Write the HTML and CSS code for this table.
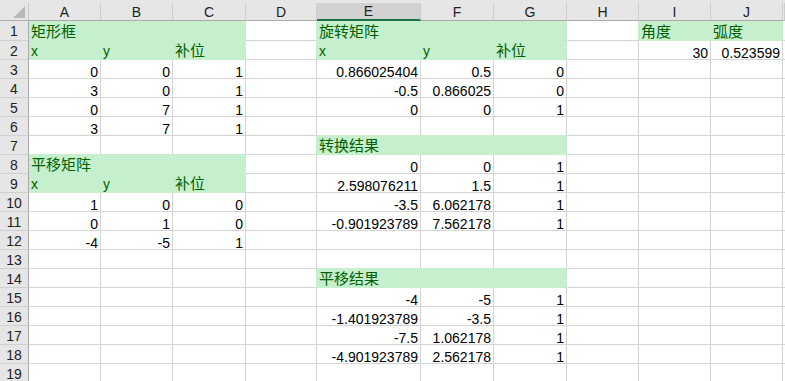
FILE: index.html
```html
<!DOCTYPE html>
<html lang="zh-CN">
<head>
<meta charset="utf-8">
<title>Sheet1</title>
<link rel="stylesheet" href="styles.css">
</head>
<body>
<div class="sheet">
  <div class="strip"></div>
  <div class="row hdr">
    <div class="corner"><span class="tri"></span></div>
    <div class="ch">A</div><div class="ch">B</div><div class="ch">C</div><div class="ch">D</div>
    <div class="ch sel">E</div><div class="ch">F</div><div class="ch">G</div><div class="ch">H</div>
    <div class="ch">I</div><div class="ch">J</div><div class="ch"></div>
  </div>

  <div class="row r1">
    <div class="rh">1</div>
    <div class="c g t cjk">矩形框</div><div class="c g"></div><div class="c g"></div><div class="c"></div>
    <div class="c g gl t cjk">旋转矩阵</div><div class="c g"></div><div class="c g"></div><div class="c"></div>
    <div class="c g gl t cjk">角度</div><div class="c g t cjk">弧度</div><div class="c"></div>
  </div>
  <div class="row">
    <div class="rh">2</div>
    <div class="c g t">x</div><div class="c g t">y</div><div class="c g t cjk">补位</div><div class="c"></div>
    <div class="c g gl t">x</div><div class="c g t">y</div><div class="c g t cjk">补位</div><div class="c"></div>
    <div class="c n">30</div><div class="c n">0.523599</div><div class="c"></div>
  </div>
  <div class="row">
    <div class="rh">3</div>
    <div class="c n">0</div><div class="c n">0</div><div class="c n">1</div><div class="c"></div>
    <div class="c n">0.866025404</div><div class="c n">0.5</div><div class="c n">0</div><div class="c"></div>
    <div class="c"></div><div class="c"></div><div class="c"></div>
  </div>
  <div class="row">
    <div class="rh">4</div>
    <div class="c n">3</div><div class="c n">0</div><div class="c n">1</div><div class="c"></div>
    <div class="c n">-0.5</div><div class="c n">0.866025</div><div class="c n">0</div><div class="c"></div>
    <div class="c"></div><div class="c"></div><div class="c"></div>
  </div>
  <div class="row">
    <div class="rh">5</div>
    <div class="c n">0</div><div class="c n">7</div><div class="c n">1</div><div class="c"></div>
    <div class="c n">0</div><div class="c n">0</div><div class="c n">1</div><div class="c"></div>
    <div class="c"></div><div class="c"></div><div class="c"></div>
  </div>
  <div class="row">
    <div class="rh">6</div>
    <div class="c n">3</div><div class="c n">7</div><div class="c n">1</div><div class="c"></div>
    <div class="c"></div><div class="c"></div><div class="c"></div><div class="c"></div>
    <div class="c"></div><div class="c"></div><div class="c"></div>
  </div>
  <div class="row">
    <div class="rh">7</div>
    <div class="c"></div><div class="c"></div><div class="c"></div><div class="c"></div>
    <div class="c g gl gt t cjk">转换结果</div><div class="c g gt"></div><div class="c g gt"></div><div class="c"></div>
    <div class="c"></div><div class="c"></div><div class="c"></div>
  </div>
  <div class="row">
    <div class="rh">8</div>
    <div class="c g gt t cjk">平移矩阵</div><div class="c g gt"></div><div class="c g gt"></div><div class="c"></div>
    <div class="c n">0</div><div class="c n">0</div><div class="c n">1</div><div class="c"></div>
    <div class="c"></div><div class="c"></div><div class="c"></div>
  </div>
  <div class="row">
    <div class="rh">9</div>
    <div class="c g t">x</div><div class="c g t">y</div><div class="c g t cjk">补位</div><div class="c"></div>
    <div class="c n">2.598076211</div><div class="c n">1.5</div><div class="c n">1</div><div class="c"></div>
    <div class="c"></div><div class="c"></div><div class="c"></div>
  </div>
  <div class="row">
    <div class="rh">10</div>
    <div class="c n">1</div><div class="c n">0</div><div class="c n">0</div><div class="c"></div>
    <div class="c n">-3.5</div><div class="c n">6.062178</div><div class="c n">1</div><div class="c"></div>
    <div class="c"></div><div class="c"></div><div class="c"></div>
  </div>
  <div class="row">
    <div class="rh">11</div>
    <div class="c n">0</div><div class="c n">1</div><div class="c n">0</div><div class="c"></div>
    <div class="c n">-0.901923789</div><div class="c n">7.562178</div><div class="c n">1</div><div class="c"></div>
    <div class="c"></div><div class="c"></div><div class="c"></div>
  </div>
  <div class="row">
    <div class="rh">12</div>
    <div class="c n">-4</div><div class="c n">-5</div><div class="c n">1</div><div class="c"></div>
    <div class="c"></div><div class="c"></div><div class="c"></div><div class="c"></div>
    <div class="c"></div><div class="c"></div><div class="c"></div>
  </div>
  <div class="row">
    <div class="rh">13</div>
    <div class="c"></div><div class="c"></div><div class="c"></div><div class="c"></div>
    <div class="c"></div><div class="c"></div><div class="c"></div><div class="c"></div>
    <div class="c"></div><div class="c"></div><div class="c"></div>
  </div>
  <div class="row">
    <div class="rh">14</div>
    <div class="c"></div><div class="c"></div><div class="c"></div><div class="c"></div>
    <div class="c g gl gt t cjk">平移结果</div><div class="c g gt"></div><div class="c g gt"></div><div class="c"></div>
    <div class="c"></div><div class="c"></div><div class="c"></div>
  </div>
  <div class="row">
    <div class="rh">15</div>
    <div class="c"></div><div class="c"></div><div class="c"></div><div class="c"></div>
    <div class="c n">-4</div><div class="c n">-5</div><div class="c n">1</div><div class="c"></div>
    <div class="c"></div><div class="c"></div><div class="c"></div>
  </div>
  <div class="row">
    <div class="rh">16</div>
    <div class="c"></div><div class="c"></div><div class="c"></div><div class="c"></div>
    <div class="c n">-1.401923789</div><div class="c n">-3.5</div><div class="c n">1</div><div class="c"></div>
    <div class="c"></div><div class="c"></div><div class="c"></div>
  </div>
  <div class="row">
    <div class="rh">17</div>
    <div class="c"></div><div class="c"></div><div class="c"></div><div class="c"></div>
    <div class="c n">-7.5</div><div class="c n">1.062178</div><div class="c n">1</div><div class="c"></div>
    <div class="c"></div><div class="c"></div><div class="c"></div>
  </div>
  <div class="row">
    <div class="rh">18</div>
    <div class="c"></div><div class="c"></div><div class="c"></div><div class="c"></div>
    <div class="c n">-4.901923789</div><div class="c n">2.562178</div><div class="c n">1</div><div class="c"></div>
    <div class="c"></div><div class="c"></div><div class="c"></div>
  </div>
  <div class="row">
    <div class="rh">19</div>
    <div class="c"></div><div class="c"></div><div class="c"></div><div class="c"></div>
    <div class="c"></div><div class="c"></div><div class="c"></div><div class="c"></div>
    <div class="c"></div><div class="c"></div><div class="c"></div>
  </div>
</div>
</body>
</html>
```
FILE: styles.css
```css
html, body {
  margin: 0;
  padding: 0;
  background: #ffffff;
  overflow: hidden;
}

.sheet {
  width: 785px;
  height: 381px;
  overflow: hidden;
  font-family: "Liberation Sans", Arial, sans-serif;
  font-size: 14px;
  color: #000000;
}

.strip {
  height: 3px;
  background: #e6e6e6;
}

.row {
  display: grid;
  grid-template-columns: 29px 72px 72px 73px 71px 104px 73px 73px 72px 72px 72px 1fr;
  height: 19px;
}

.row.r1 {
  height: 20px;
}

.row.hdr {
  height: 18px;
}

.corner {
  position: relative;
  background: #e6e6e6;
  border-right: 1px solid #c6c6c6;
  border-bottom: 1px solid #ababab;
  box-sizing: border-box;
}

.tri {
  position: absolute;
  right: 3px;
  bottom: 2px;
  width: 0;
  height: 0;
  border-left: 12px solid transparent;
  border-bottom: 12px solid #b9b9b9;
}

.ch {
  box-sizing: border-box;
  background: #e6e6e6;
  border-right: 1px solid #cdcdcd;
  border-bottom: 1px solid #ababab;
  display: flex;
  align-items: center;
  justify-content: center;
  color: #222222;
  line-height: 14px;
}

.ch.sel {
  background: #d2d2d2;
  border-bottom: 2px solid #217346;
}

.rh {
  box-sizing: border-box;
  background: #e6e6e6;
  border-right: 1px solid #ababab;
  border-bottom: 1px solid #d0d0d0;
  display: flex;
  align-items: center;
  justify-content: center;
  color: #222222;
  line-height: 14px;
  padding-top: 1px;
}

.c {
  box-sizing: border-box;
  border-right: 1px solid #d4d4d4;
  border-bottom: 1px solid #d4d4d4;
  display: flex;
  align-items: flex-end;
  padding: 0 2px;
  line-height: 12px;
  white-space: nowrap;
}

.n {
  justify-content: flex-end;
}

.t {
  justify-content: flex-start;
  line-height: 15px;
  padding-bottom: 0;
}

.g {
  background: #c6efce;
  border-color: #c6efce;
  color: #006100;
}

.gl {
  box-shadow: -1px 0 0 #c6efce;
}

.gt {
  box-shadow: 0 -1px 0 #c6efce;
}

.gl.gt {
  box-shadow: -1px 0 0 #c6efce, 0 -1px 0 #c6efce, -1px -1px 0 #c6efce;
}

.cjk {
  font-family: "Noto Sans CJK SC", "Liberation Sans", sans-serif;
  font-size: 15px;
  line-height: 18px;
}
```
